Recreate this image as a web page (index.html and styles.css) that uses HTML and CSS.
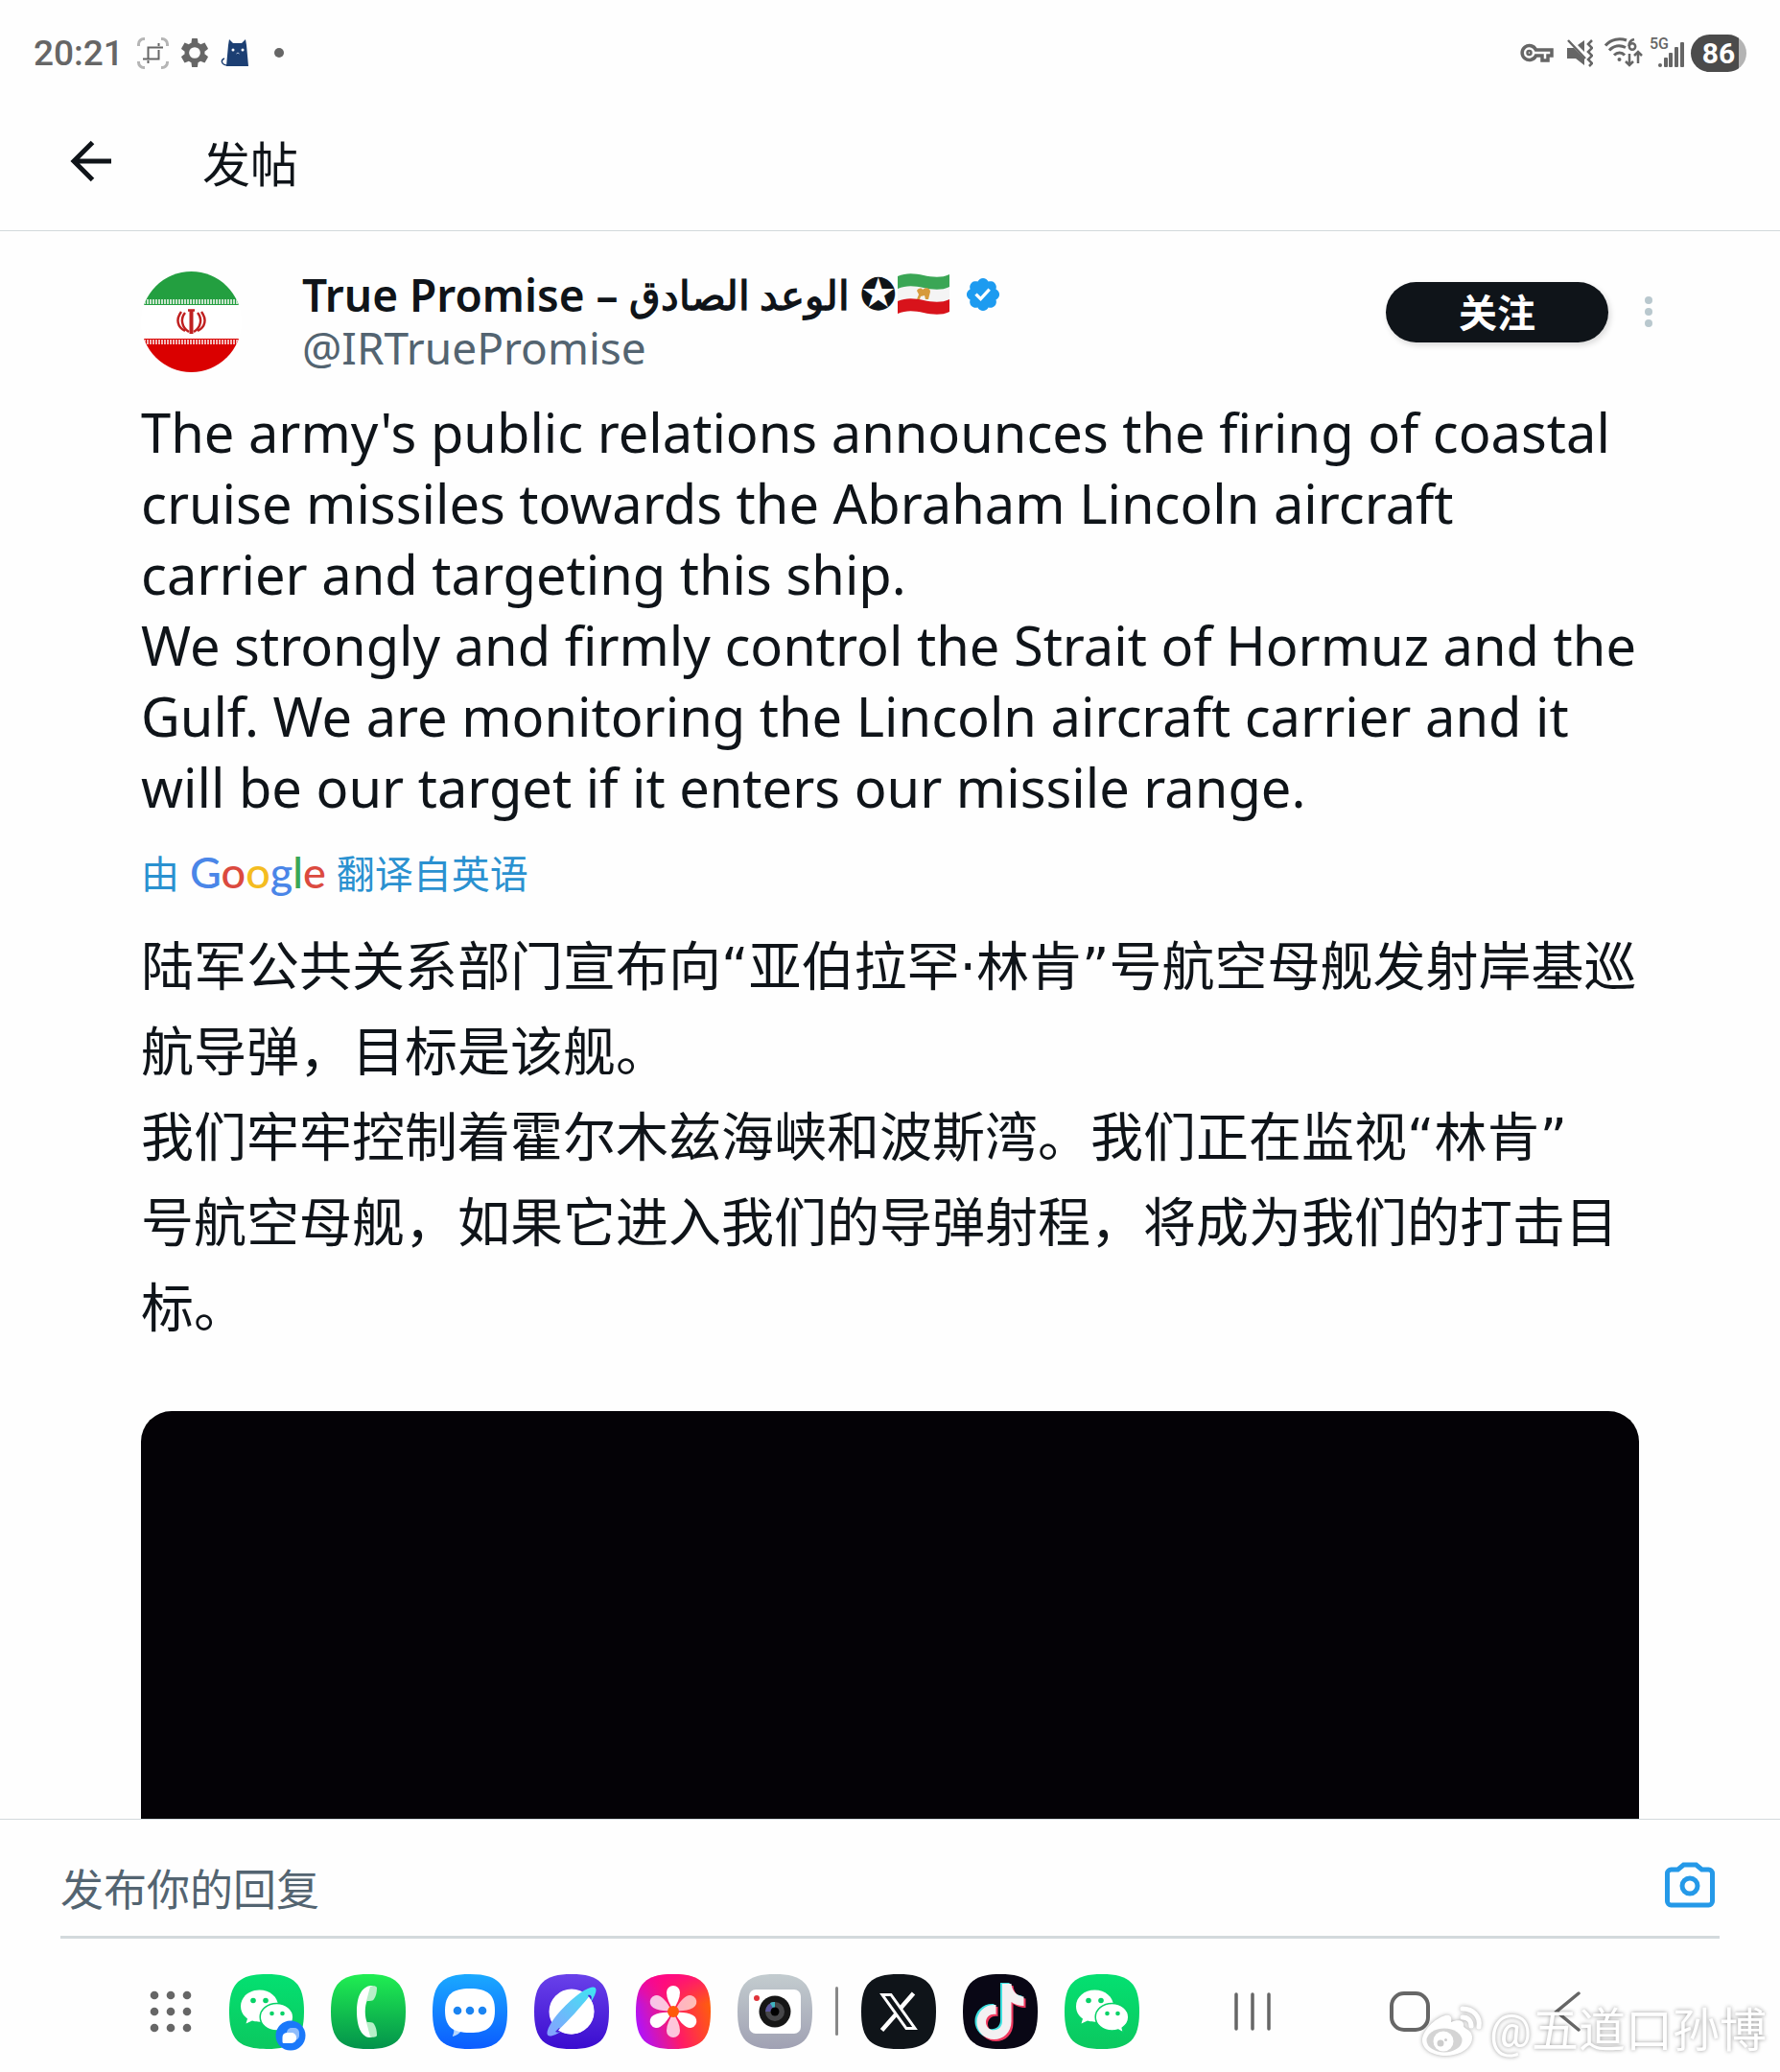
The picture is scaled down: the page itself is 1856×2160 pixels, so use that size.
FILE: index.html
```html
<!DOCTYPE html>
<html lang="zh-CN">
<head>
  <meta charset="UTF-8">
  <meta name="viewport" content="width=device-width, initial-scale=1">
  <title>发帖</title>
  <link rel="stylesheet" href="styles.css">
</head>
<body>
  <!-- shared shapes -->
  <svg class="defs" width="0" height="0" aria-hidden="true">
    <defs>
      <linearGradient id="wechatBg" x1="0" y1="0" x2="0" y2="1"><stop offset="0" stop-color="#04e071"/><stop offset="1" stop-color="#0bc85f"/></linearGradient>
      <linearGradient id="phoneBg" x1="0" y1="0" x2="0" y2="1"><stop offset="0" stop-color="#20ee52"/><stop offset="1" stop-color="#03924b"/></linearGradient>
      <linearGradient id="msgBg" x1="0" y1="0" x2="0" y2="1"><stop offset="0" stop-color="#1aa9ff"/><stop offset="1" stop-color="#0b5cff"/></linearGradient>
      <linearGradient id="webBg" x1="0" y1="0" x2="0" y2="1"><stop offset="0" stop-color="#6941ea"/><stop offset="1" stop-color="#3a0ccf"/></linearGradient>
      <linearGradient id="ring"><stop offset="0" stop-color="#86a0ff"/><stop offset="1" stop-color="#3fe6f2"/></linearGradient>
      <linearGradient id="galleryBg" x1="0" y1="0.7" x2="1" y2="0.4"><stop offset="0" stop-color="#ad12ff"/><stop offset="0.5" stop-color="#ff1a66"/><stop offset="1" stop-color="#ff5f0a"/></linearGradient>
      <linearGradient id="galleryTop" x1="0" y1="0" x2="0" y2="1"><stop offset="0" stop-color="#ff0090" stop-opacity="0.8"/><stop offset="0.4" stop-color="#ff0090" stop-opacity="0"/></linearGradient>
      <linearGradient id="cameraBg" x1="0" y1="0" x2="0" y2="1"><stop offset="0" stop-color="#c3cccf"/><stop offset="1" stop-color="#a0a1b3"/></linearGradient>
      <clipPath id="avatarClip"><circle cx="52.5" cy="52.5" r="52.5"/></clipPath>
      <path id="tile" d="M39 0C68 0 78 10 78 39S68 78 39 78 0 68 0 39 10 0 39 0Z"/>
      <g id="bubbles">
        <path fill="#fff" d="M31.500 16.500c-11 0-19.500 7.500-19.500 17 0 5.500 2.700 9.900 7 13l-1.500 5 6.500-3c2.500.8 5 1.200 8 1.200C43 49.500 51 42 51 33S42.500 16.500 31.500 16.500Z"/>
        <path fill="#fff" stroke="#07d267" stroke-width="1.500" d="M49.500 30.500c-9.600 0-17.300 6.200-17.300 14.300S39.900 59 49.500 59c2.300 0 4.500-.3 6.500-1l5.500 3.200-1.300-5.200c4.200-2.800 6.600-6.700 6.600-11.200 0-8.100-7.700-14.300-17.300-14.300Z"/>
        <g fill="#07d267"><circle cx="25" cy="27.500" r="2.800"/><circle cx="38" cy="27.500" r="2.800"/><circle cx="44.500" cy="41" r="2.300"/><circle cx="55.500" cy="41" r="2.300"/></g>
      </g>
      <path id="note" d="M39 9h9.500c.6 7.500 6 13 13 13.500v9.500c-5 0-9.500-1.500-13-4v20c0 12-8.500 19-18 19-10 0-18-8-18-18 0-11 9-19 20-18v10c-5.500-1.200-10.500 2.500-10.500 8 0 4.700 3.800 8.300 8.300 8.300 5 0 8.700-3.800 8.700-9.300Z"/>
    </defs>
  </svg>

  <div class="statusbar">
    <div class="status-left">
      <span class="time">20:21</span>
      <svg width="33" height="33" viewBox="0 0 33 33" fill="none">
        <g stroke="#b5b5b5" stroke-width="3"><path d="M1.500 9V7A5.500 5.500 0 0 1 7 1.500h1M25 1.500h1A5.500 5.500 0 0 1 31.500 7v2M31.500 25v1a5.500 5.500 0 0 1-5.500 5.500h-1M8 31.500H7A5.500 5.500 0 0 1 1.500 26v-1"/></g>
        <g stroke="#666" stroke-width="2"><path d="M11.500 22V10.500H27M6 22.500h16.500V13M22.500 6v3M11.500 24v3"/></g>
      </svg>
      <svg width="30" height="30" viewBox="1.800 1 20.400 22"><path fill="#666" d="M19.600 13c0-.3.100-.6.100-1s0-.7-.1-1l2.400-1.800c.2-.2.300-.4.100-.7l-2.200-3.900c-.1-.2-.4-.3-.7-.2l-2.700 1.100c-.6-.4-1.200-.8-1.900-1L14.200 1.400c0-.2-.2-.4-.5-.4h-3.400c-.3 0-.5.200-.5.400L9.400 4.500c-.7.200-1.300.6-1.900 1L4.800 4.400c-.3-.1-.5 0-.7.200L1.900 8.500c-.2.300-.1.500.1.700L4.400 11c0 .3-.1.700-.1 1s0 .7.100 1L2 14.800c-.2.200-.3.400-.1.700l2.200 3.900c.1.200.4.300.7.200l2.700-1.100c.6.400 1.200.8 1.900 1l.4 3.100c0 .2.200.4.500.4h3.400c.3 0 .5-.2.500-.4l.4-3.100c.7-.2 1.300-.6 1.900-1l2.700 1.100c.3.100.5 0 .7-.2l2.200-3.900c.2-.3.100-.5-.1-.7ZM12 16.300a4.300 4.300 0 1 1 0-8.600 4.300 4.300 0 0 1 0 8.600Z"/></svg>
      <svg class="cat" width="30" height="30" viewBox="0 0 30 30">
        <path fill="#1c3f73" d="M8 7 9 1l4 4h9l4-4 1 6 2 22H6Z"/>
        <path fill="none" stroke="#1c3f73" stroke-width="1.500" d="M4 21c-4 1-4 7 4 7"/>
        <circle cx="13" cy="12" r="1.500" fill="#fff"/><circle cx="23" cy="12" r="1.500" fill="#fff"/>
        <path d="m16.500 16 1.500-1 1.500 1" stroke="#b9c6da" fill="none"/>
      </svg>
      <span class="dot"></span>
    </div>
    <div class="status-right">
      <svg class="wide" width="36" height="24" viewBox="0 0 36 24" fill="none" stroke="#666" stroke-width="3.500"><path d="M16.500 9H33v6h-4v5h-6v-5h-6.500a7.500 7.500 0 1 1 0-6Z"/><circle cx="9.500" cy="12" r="2" stroke-width="2.500"/></svg>
      <svg class="wide" width="28" height="30" viewBox="0 0 28 30"><path fill="#666" d="M1 10h7l11 11v7l-9-7H1Zm11-3 7-5v12Z"/><path fill="none" stroke="#666" stroke-width="2.500" d="m2 2 18 19M27 2l-4 4 4 4-4 4 4 4-4 4 4 4-3 3"/></svg>
      <svg width="40" height="32" viewBox="0 0 40 32" fill="none" stroke="#666" stroke-width="3">
        <path d="M1 8.500C7 1.500 16 .5 23 3M5 13.500c4.500-5 11-6 17-3M10 18.500c3.500-3.500 8-3.500 11 0"/>
        <circle cx="15.500" cy="23" r="2" fill="#666" stroke="none"/>
        <path d="M26 17v12m-4-4 4 4 4-4M35 27V15m-4 4 4-4 4 4" stroke-width="2.500"/>
        <path d="M31 2c-4 1-5.500 4-5.500 7" stroke-width="2.500"/><circle cx="29" cy="9.500" r="3.200" stroke-width="2.500"/>
      </svg>
      <div class="signal">
        <span>5G</span>
        <svg width="28" height="26" viewBox="0 0 28 26" fill="#666"><circle cx="3" cy="24" r="2"/><rect x="7" y="16" width="4" height="10" rx="1"/><rect x="12" y="11" width="4" height="15" rx="1"/><rect x="18" y="5" width="4" height="21" rx="1"/><rect x="24" y="0" width="4" height="26" rx="1"/></svg>
      </div>
      <span class="battery">86</span>
    </div>
  </div>

  <header class="topbar">
    <button class="icon-btn" aria-label="返回">
      <svg width="44" height="44" viewBox="0 0 44 44" fill="none" stroke="#0f1419" stroke-width="5"><path d="M23.500 2.500 4 22l19.500 19.500M4 22h39"/></svg>
    </button>
    <h1>发帖</h1>
  </header>

  <main class="post">
    <div class="author">
      <svg class="avatar" width="105" height="105" viewBox="0 0 105 105">
        <g clip-path="url(#avatarClip)">
          <path fill="#fff" d="M0 0h105v105H0Z"/>
          <path fill="#239f40" d="M0 0h105v35H0Z"/>
          <path fill="#da0000" d="M0 70h105v35H0Z"/>
          <path stroke="#c9e5cd" stroke-width="5" stroke-dasharray="2 1" d="M0 31.500h105"/>
          <path stroke="#f3b6b6" stroke-width="5" stroke-dasharray="2 1" d="M0 73.500h105"/>
          <g fill="none" stroke="#c02020" stroke-width="2.500"><path stroke-width="4" d="M52.500 40v25"/><path d="M46 43c-5 6-4 15 4 20M59 43c5 6 4 15-4 20M42 42c-6 8-4 16 4 20M63 42c6 8 4 16-4 20M49 40.500h7"/></g>
        </g>
      </svg>
      <div class="names">
        <div class="name">
          <span>True Promise –</span>
          <span class="arabic" lang="ar" dir="rtl">الوعد الصادق</span>
          <span class="star">✪</span>
          <svg class="flag" width="56" height="44" viewBox="0 0 56 44">
            <path fill="#3aa655" d="M1 3c9-4 18-3 27-1s19 3 27-1v14c-8 4-18 3-27 1s-18-3-27 1Z"/>
            <path fill="#f4f4f4" d="M1 16c9-4 18-3 27-1s19 3 27-1v14c-8 4-18 3-27 1s-18-3-27 1Z"/>
            <path fill="#d8131b" d="M1 29c9-4 18-3 27-1s19 3 27-1v13c-8 4-18 3-27 1s-18-3-27 1Z"/>
            <path fill="#d69a3c" d="M21 18c2-3 5-3 6-1 3-3 8-2 8 2l-2 8h-3l-1-4-4 1-1 3h-3l2-5Z"/>
          </svg>
          <svg class="verified" width="40" height="40" viewBox="0 0 22 22"><path fill="#1d9bf0" d="M20.396 11c-.018-.646-.215-1.275-.57-1.816-.354-.54-.852-.972-1.438-1.246.223-.607.270-1.264.140-1.897-.131-.634-.437-1.218-.882-1.687-.470-.445-1.053-.750-1.687-.882-.633-.130-1.290-.083-1.897.140-.273-.587-.704-1.086-1.245-1.440S11.647 1.620 11 1.604c-.646.017-1.273.213-1.813.568s-.969.854-1.240 1.440c-.608-.223-1.267-.272-1.902-.140-.635.130-1.220.436-1.690.882-.445.470-.749 1.055-.878 1.688-.130.633-.080 1.290.144 1.896-.587.274-1.087.705-1.443 1.245-.356.540-.555 1.170-.574 1.817.020.647.218 1.276.574 1.817.356.540.856.972 1.443 1.245-.224.606-.274 1.263-.144 1.896.130.634.433 1.218.877 1.688.470.443 1.054.747 1.687.878.633.132 1.290.084 1.897-.136.274.586.705 1.084 1.246 1.439.540.354 1.170.551 1.816.569.647-.016 1.276-.213 1.817-.567s.972-.854 1.245-1.440c.604.239 1.266.296 1.903.164.636-.132 1.220-.447 1.680-.907.460-.460.776-1.044.908-1.681s.075-1.299-.165-1.903c.586-.274 1.084-.705 1.439-1.246.354-.540.551-1.170.569-1.816ZM9.662 14.850l-3.429-3.428 1.293-1.302 2.072 2.072 4.400-4.794 1.347 1.246Z"/></svg>
        </div>
        <a class="handle" href="#">@IRTruePromise</a>
      </div>
      <button class="follow">关注</button>
      <button class="icon-btn more" aria-label="更多">
        <svg width="10" height="34" viewBox="0 0 10 34" fill="#b9c8ce"><circle cx="5" cy="5" r="4"/><circle cx="5" cy="17" r="4"/><circle cx="5" cy="29" r="4"/></svg>
      </button>
    </div>

    <p class="text">The army's public relations announces the firing of coastal cruise missiles towards the Abraham Lincoln aircraft<br>
      carrier and targeting this ship.<br>
      We strongly and firmly control the Strait of Hormuz and the Gulf. We are monitoring the Lincoln aircraft carrier and it will be our target if it enters our missile range.</p>

    <a class="translated" href="#"><span>由</span><span class="google"><i class="b">G</i><i class="r">o</i><i class="y">o</i><i class="b">g</i><i class="g">l</i><i class="r">e</i></span><span>翻译自英语</span></a>

    <p class="text-zh">陆军公共关系部门宣布向“亚伯拉罕·林肯”号航空母舰发射岸基巡航导弹，目标是该舰。<br>我们牢牢控制着霍尔木兹海峡和波斯湾。我们正在监视“林肯”<br>号航空母舰，如果它进入我们的导弹射程，将成为我们的打击目标。</p>

    <div class="media"></div>
  </main>

  <div class="reply">
    <div class="reply-box">
      <input type="text" placeholder="发布你的回复" aria-label="发布你的回复">
      <button class="icon-btn" aria-label="相机">
        <svg width="52" height="48" viewBox="0 0 52 48" fill="none" stroke="#2599e8" stroke-width="5"><path d="M6.500 8h7l6-5h13l6 5h7a4 4 0 0 1 4 4v29a4 4 0 0 1-4 4h-39a4 4 0 0 1-4-4V12a4 4 0 0 1 4-4Z"/><circle cx="26" cy="25" r="8"/></svg>
      </button>
    </div>
  </div>

  <footer class="dock">
    <button class="icon-btn" aria-label="所有应用">
      <svg width="44" height="44" viewBox="0 0 44 44" fill="#666"><circle cx="5" cy="5" r="4.300"/><circle cx="22" cy="5" r="4.300"/><circle cx="39" cy="5" r="4.300"/><circle cx="5" cy="22" r="4.300"/><circle cx="22" cy="22" r="4.300"/><circle cx="39" cy="22" r="4.300"/><circle cx="5" cy="39" r="4.300"/><circle cx="22" cy="39" r="4.300"/><circle cx="39" cy="39" r="4.300"/></svg>
    </button>
    <div class="apps">
      <button class="icon-btn" aria-label="微信分身">
        <svg width="78" height="78" viewBox="0 0 78 78" overflow="visible"><use href="#tile" fill="url(#wechatBg)"/><use href="#bubbles"/><circle cx="64" cy="64" r="15.500" fill="#1a78fa"/><rect x="60" y="56" width="13" height="13" rx="5" fill="#8fbcfb"/><path fill="#fff" d="M60 61h5a5 5 0 0 1 5 5v1a5 5 0 0 1-5 5h-8a1.500 1.500 0 0 1-1.500-1.500V66a5 5 0 0 1 4.500-5Z"/></svg>
      </button>
      <button class="icon-btn" aria-label="电话">
        <svg width="78" height="78" viewBox="0 0 78 78"><use href="#tile" fill="url(#phoneBg)"/><path fill="#fff" d="M42 12C31 13 27 25 27 39s4 26 13 27c3 0 5-1 5-3l-7-12c-3-6-3-18 0-24l7-12c0-2-1-3-3-3Z"/><path fill="#b7efc8" d="M41 13c3-1 6-1 7 1 0 5-1 9-3 12-1 2-4 2-8 2ZM41 65c3 1 6 1 7-1 0-5-1-9-3-12-1-2-4-2-8-2Z"/></svg>
      </button>
      <button class="icon-btn" aria-label="信息">
        <svg width="78" height="78" viewBox="0 0 78 78"><use href="#tile" fill="url(#msgBg)"/><path fill="#b5d6ff" d="M22 57c1 4-1 6-1 8 4-1 7-3 9-6Z"/><path fill="#fff" d="M39 15c18 0 26 6 26 23S57 61 39 61 13 55 13 38s8-23 26-23Z"/><g fill="#1b84f2"><circle cx="26" cy="38" r="4.300"/><circle cx="39" cy="38" r="4.300"/><circle cx="52" cy="38" r="4.300"/></g></svg>
      </button>
      <button class="icon-btn" aria-label="浏览器">
        <svg width="78" height="78" viewBox="0 0 78 78"><use href="#tile" fill="url(#webBg)"/><circle cx="39" cy="39" r="23.500" fill="#fff"/><ellipse cx="39" cy="39" rx="35" ry="9" fill="url(#ring)" transform="rotate(-45 39 39)"/><path fill="#4a1fd8" d="M56 22c3-1 5 1 3 6ZM22 60c2 1 4 1 7-1l-3-3Z"/><path fill="#fff" d="M57 23.500C48 35 36 48 25 58.500A24 24 0 0 0 57 23.500Z"/></svg>
      </button>
      <button class="icon-btn" aria-label="相册">
        <svg width="78" height="78" viewBox="0 0 78 78"><use href="#tile" fill="url(#galleryBg)"/><use href="#tile" fill="url(#galleryTop)"/>
          <g fill="#fff"><path id="petal" d="M39 37c-4-6-7-12-7-18a7 7 0 0 1 14 0c0 6-3 12-7 18Z"/><use href="#petal" transform="rotate(60 39 39)" opacity="0.650"/><use href="#petal" transform="rotate(120 39 39)"/><use href="#petal" transform="rotate(180 39 39)" opacity="0.750"/><use href="#petal" transform="rotate(240 39 39)"/><use href="#petal" transform="rotate(300 39 39)" opacity="0.750"/></g>
          <circle cx="39" cy="39" r="6" fill="#ff5a0a"/></svg>
      </button>
      <button class="icon-btn" aria-label="拍照">
        <svg width="78" height="78" viewBox="0 0 78 78"><use href="#tile" fill="url(#cameraBg)"/><rect x="12" y="16" width="54" height="46" rx="7" fill="#fff"/><circle cx="20" cy="25" r="3" fill="#e0333a"/><circle cx="39" cy="39" r="16.500" fill="#161616"/><circle cx="39" cy="39" r="10" fill="#474749"/><path fill="#5a569c" d="M29 39a10 10 0 0 1 10-10v10Z"/><path fill="#3fb4c0" d="M34 30a10 10 0 0 1 5-1v10Z"/><circle cx="39" cy="39" r="4.500" fill="#000"/></svg>
      </button>
    </div>
    <span class="divider"></span>
    <div class="apps">
      <button class="icon-btn" aria-label="X">
        <svg width="78" height="78" viewBox="0 0 78 78"><use href="#tile" fill="#0f1419"/><path fill="none" stroke="#fff" stroke-width="3" d="M22 21.500h9l25 35h-9Z"/><path fill="none" stroke="#fff" stroke-width="4.500" d="M54.500 20 41 35.500M36.500 41.500 21.500 58.500"/></svg>
      </button>
      <button class="icon-btn" aria-label="抖音">
        <svg width="78" height="78" viewBox="0 0 78 78"><use href="#tile" fill="#090715"/><use href="#note" x="0" y="0" fill="#3de0e0"/><use href="#note" x="4" y="3" fill="#f0385f"/><use href="#note" x="2" y="1" fill="#f3f0f2"/></svg>
      </button>
      <button class="icon-btn" aria-label="微信">
        <svg width="78" height="78" viewBox="0 0 78 78"><use href="#tile" fill="url(#wechatBg)"/><use href="#bubbles"/></svg>
      </button>
    </div>
    <nav class="navkeys">
      <button class="icon-btn" aria-label="最近任务"><svg width="38" height="42" viewBox="0 0 38 42" stroke="#666" stroke-width="3.500" stroke-linecap="round"><path d="M2 3v36M19 3v36M36 3v36"/></svg></button>
      <button class="icon-btn" aria-label="主屏幕"><svg width="42" height="42" viewBox="0 0 42 42"><rect x="2" y="2" width="38" height="38" rx="13" fill="none" stroke="#666" stroke-width="4"/></svg></button>
      <button class="icon-btn" aria-label="后退"><svg width="28" height="42" viewBox="0 0 28 42"><path d="M26 2 3 21l23 19" fill="none" stroke="#666" stroke-width="3.500" stroke-linecap="round"/></svg></button>
    </nav>
    <div class="watermark">
      <svg width="66" height="56" viewBox="0 0 66 56" fill="none">
        <path fill="#fff" d="M2 37c0-10 13-23 24-26 6-1 7 3 6 7 7-3 14-2 13 4 0 3 8 3 9 11 1 11-12 20-27 20S2 46 2 37Z"/>
        <ellipse cx="25" cy="37" rx="18.500" ry="12.500" fill="#d4d4d4"/><circle cx="24" cy="38" r="10.500" fill="#fff"/><circle cx="21" cy="40" r="3.500" fill="#ccc"/><circle cx="26.500" cy="36.500" r="1.500" fill="#ccc"/>
        <path stroke="#fff" stroke-width="5" stroke-linecap="round" d="M44 4c11 0 19 8 17 19M44 13c6 0 9 4 9 9"/>
      </svg>
      <span>@五道口孙博</span>
    </div>
  </footer>
</body>
</html>
```
FILE: styles.css
```css
* {
  box-sizing: border-box;
}
body {
  margin: 0;
  min-height: 100vh;
  display: flex;
  flex-direction: column;
  background: #fefefe;
  color: #0f1419;
  font-family: "Noto Sans", "Noto Sans CJK SC", sans-serif;
}
svg {
  display: block;
  flex: none;
}
.defs {
  position: absolute;
}
h1, p {
  margin: 0;
  font-weight: 400;
}
a {
  text-decoration: none;
}
.icon-btn {
  display: block;
  flex: none;
  padding: 0;
  border: 0;
  background: none;
}

/* status bar */
.statusbar {
  display: flex;
  justify-content: space-between;
  height: 110px;
  padding: 0 35px;
  color: #666;
  font-family: Roboto, sans-serif;
}
.status-left,
.status-right {
  display: flex;
  align-items: center;
}
.status-left {
  gap: 12px;
}
.status-right {
  gap: 7px;
}
.status-right .wide {
  margin-right: 5px;
}
.time {
  margin-right: 2px;
  font-size: 37px;
  font-weight: 500;
}
.dot {
  width: 10px;
  height: 10px;
  margin-left: 14px;
  border-radius: 50%;
  background: #666;
}
.signal {
  display: flex;
  align-items: flex-end;
  height: 30px;
  position: relative;
  padding-left: 8px;
}
.signal span {
  position: absolute;
  left: 0;
  top: 0;
  font-size: 16px;
  font-weight: 500;
  line-height: 12px;
}
.battery {
  width: 58px;
  height: 39px;
  border-radius: 20px;
  background: linear-gradient(to right, #4b4b4b 86%, #b4b4b4 86%);
  color: #fff;
  font-size: 30px;
  font-weight: 700;
  line-height: 39px;
  text-align: center;
}

/* title bar */
.topbar {
  display: flex;
  align-items: center;
  gap: 94px;
  height: 131px;
  padding: 0 73px 14px;
  border-bottom: 1px solid #d3d9dc;
}
.topbar h1 {
  padding-top: 6px;
  font-size: 50px;
  line-height: 60px;
}

/* post */
.post {
  flex: 1;
  display: flex;
  flex-direction: column;
  padding: 39px 147px 0;
}
.author {
  display: flex;
  align-items: flex-start;
}
.avatar {
  margin-top: 3px;
}
.names {
  flex: 1;
  margin-left: 63px;
}
.name {
  display: flex;
  align-items: center;
  height: 54px;
  font-size: 46px;
  font-weight: 600;
  line-height: 54px;
  white-space: nowrap;
}
.arabic {
  margin-left: 11px;
  font-size: 42px;
}
.star {
  margin-left: 10px;
  font-family: "DejaVu Sans", sans-serif;
  font-size: 46px;
  font-weight: 400;
}
.verified {
  margin-left: 14px;
}
.handle {
  display: block;
  color: #536471;
  font-size: 46px;
  line-height: 56px;
}
.follow {
  width: 232px;
  height: 63px;
  margin-top: 14px;
  padding: 0;
  border: 0;
  border-radius: 32px;
  background: #0f1419;
  box-shadow: 2px 3px 6px rgba(0, 0, 0, 0.15);
  color: #fff;
  font-family: inherit;
  font-size: 40px;
  font-weight: 700;
  line-height: 64px;
}
.more {
  margin: 28px -15px 0 37px;
}
.text {
  margin-top: 23px;
  font-size: 56px;
  line-height: 74px;
}
.translated {
  display: flex;
  align-items: center;
  gap: 11px;
  height: 60px;
  margin-top: 22px;
  color: #2a91d0;
  font-size: 40px;
}
.google {
  font-family: Lato, sans-serif;
  font-size: 45px;
  font-weight: 500;
}
.google i {
  font-style: normal;
}
.b { color: #4a86e8; }
.r { color: #db4a3f; }
.y { color: #f4bc20; }
.g { color: #3aa757; }
.text-zh {
  margin-top: 25px;
  font-family: "DejaVu Sans", "Noto Sans CJK SC", sans-serif;
  font-size: 55px;
  line-height: 89px;
}
.media {
  flex: 1;
  min-height: 300px;
  margin-top: 62px;
  border-radius: 32px 32px 0 0;
  background: #040206;
}

/* reply box */
.reply {
  padding: 0 63px;
  border-top: 1px solid #d3d9dc;
}
.reply-box {
  display: flex;
  align-items: center;
  height: 124px;
  padding: 14px 5px 0 0;
  border-bottom: 3px solid #d3d9dc;
}
.reply input {
  flex: 1;
  min-width: 0;
  padding: 10px 0 0;
  border: 0;
  outline: 0;
  background: none;
  font-family: inherit;
  font-size: 45px;
}
.reply input::placeholder {
  color: #536471;
  opacity: 1;
}

/* dock */
.dock {
  position: relative;
  display: flex;
  align-items: center;
  height: 139px;
  padding: 12px 0 0 156px;
}
.apps {
  display: flex;
  gap: 28px;
}
.dock > .icon-btn {
  margin-right: 39px;
}
.divider {
  width: 3px;
  height: 51px;
  margin: 0 24px;
  border-radius: 2px;
  background: #888;
}
.navkeys {
  display: flex;
  margin-left: 36px;
}
.navkeys .icon-btn {
  display: flex;
  justify-content: center;
  width: 164px;
}
.watermark {
  position: absolute;
  right: 14px;
  bottom: 12px;
  display: flex;
  align-items: center;
  gap: 6px;
  color: #fff;
  font-family: Roboto, "Noto Sans CJK SC", sans-serif;
  font-size: 49px;
  line-height: 60px;
  text-shadow: 0 0 4px rgba(0, 0, 0, 0.4);
}
.watermark svg {
  filter: drop-shadow(0 0 2px rgba(0, 0, 0, 0.35));
}
```
